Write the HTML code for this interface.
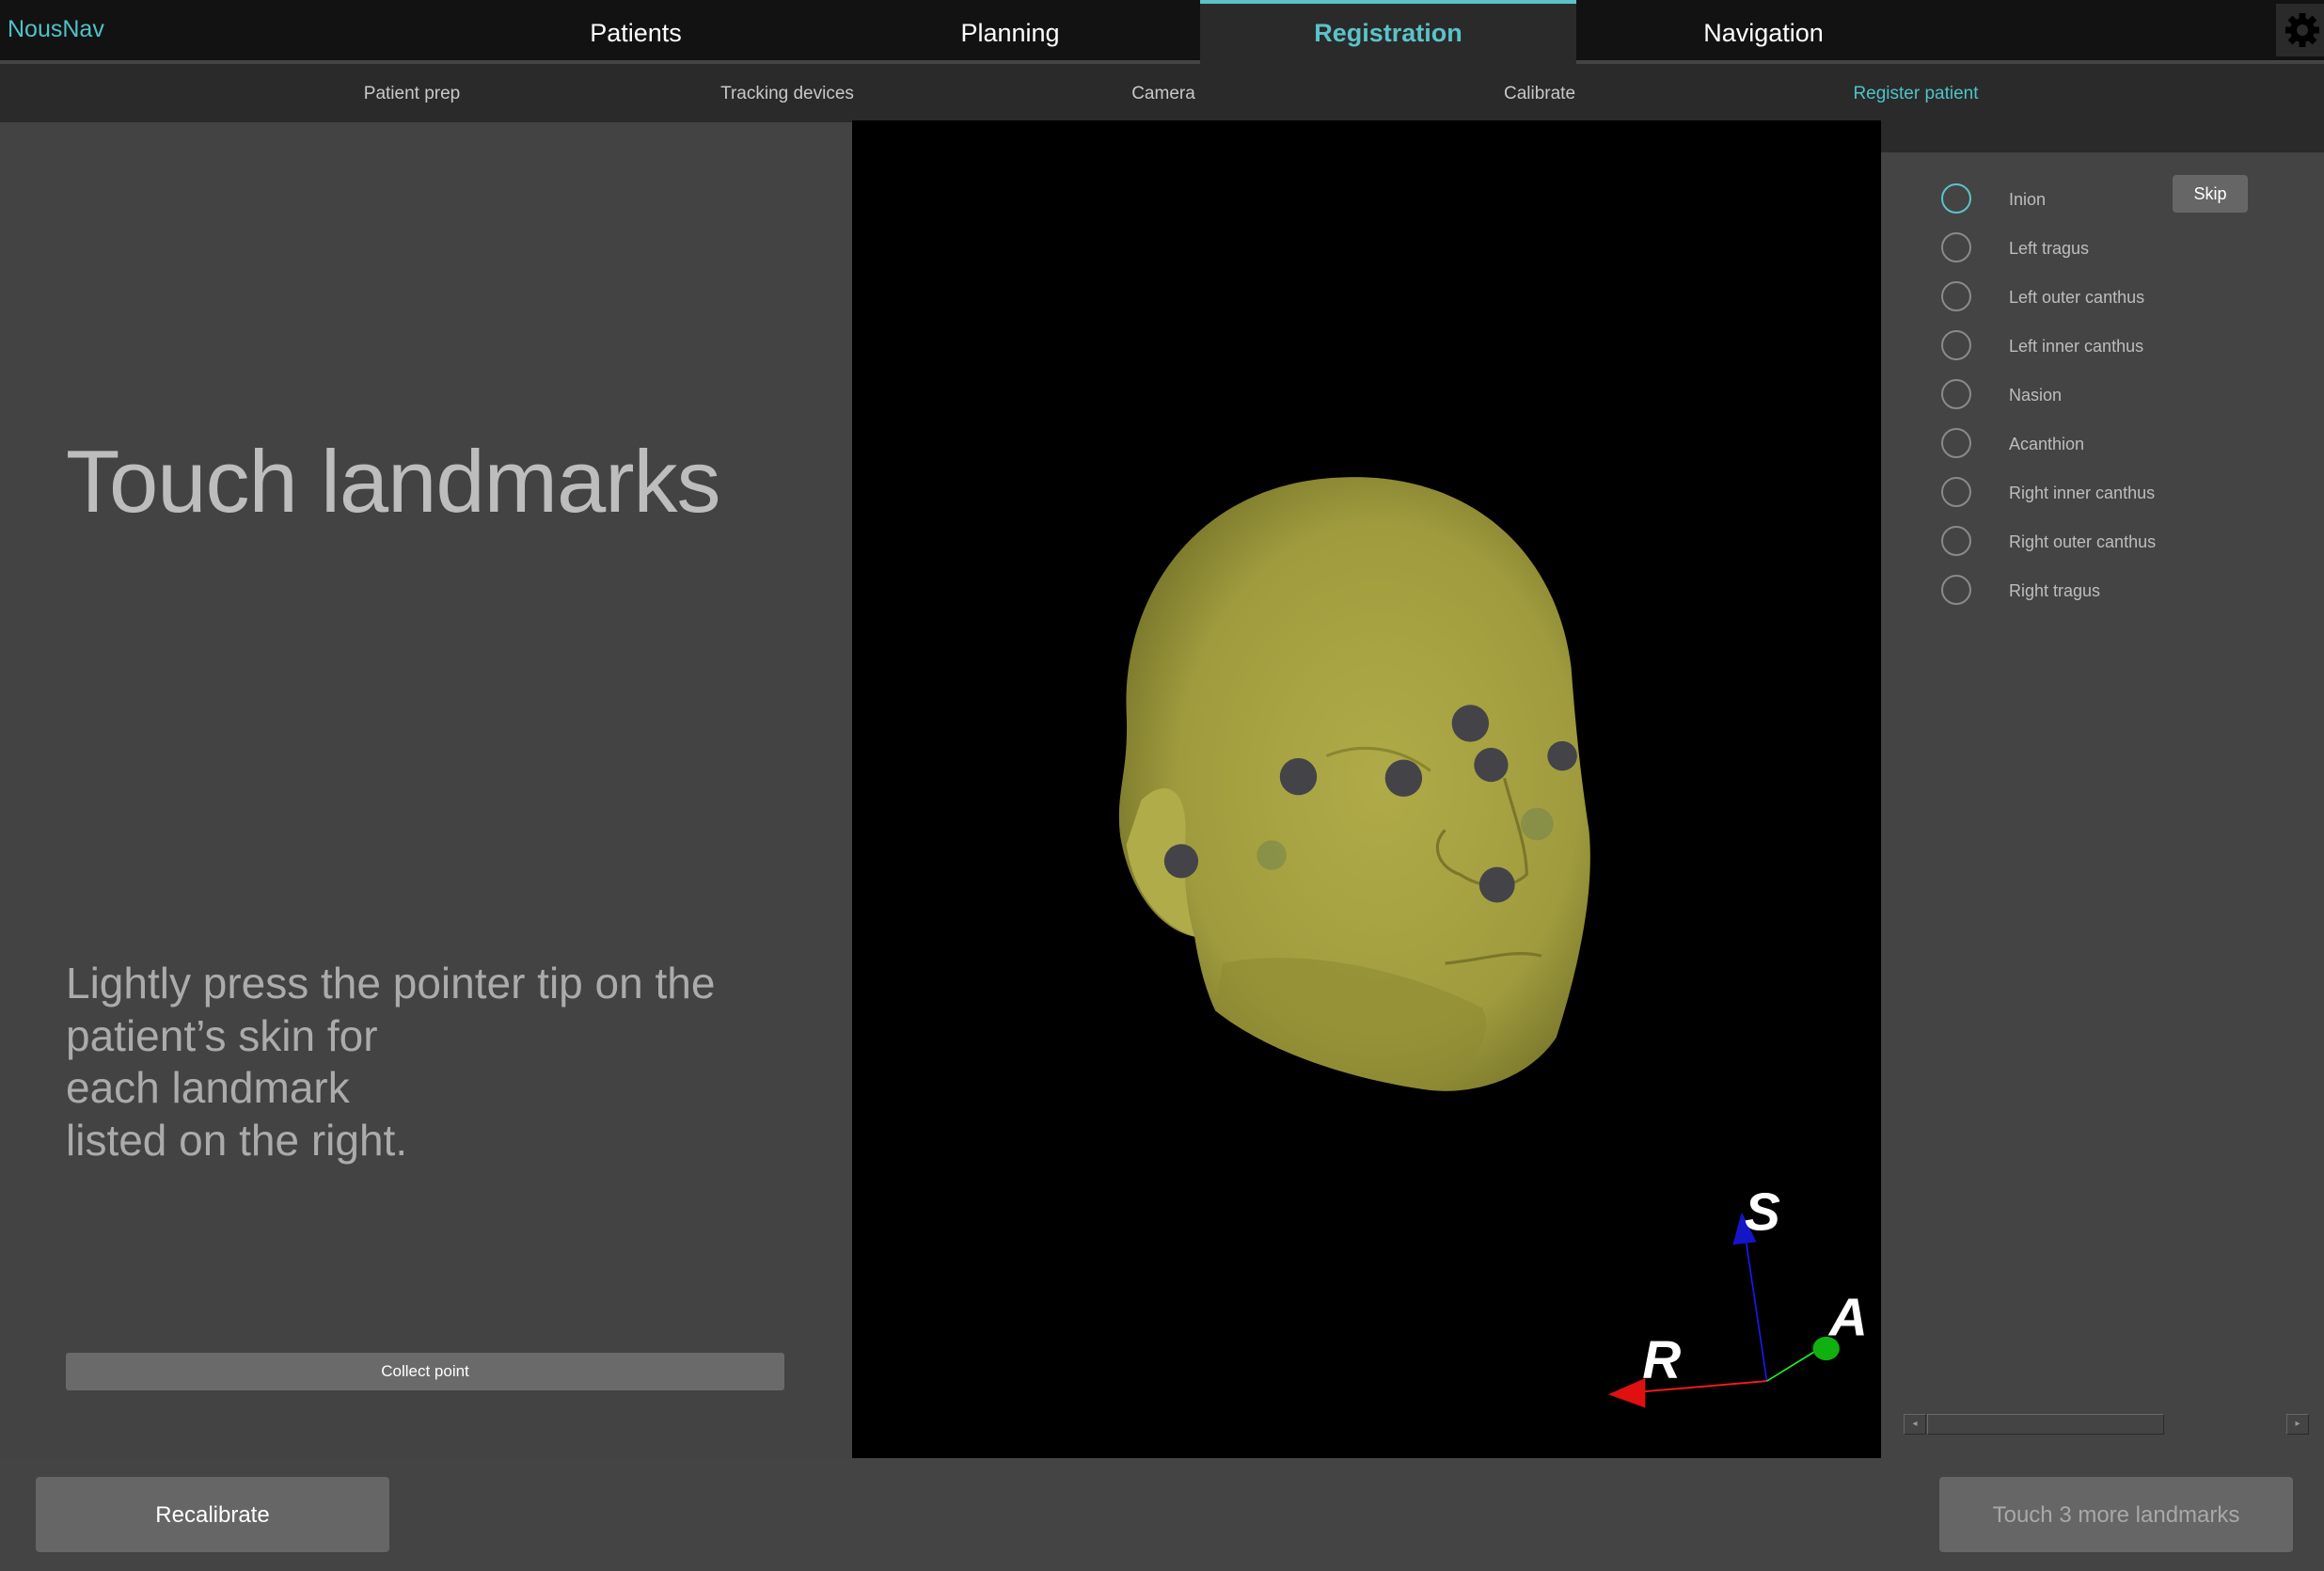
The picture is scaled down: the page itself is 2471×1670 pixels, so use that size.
<!DOCTYPE html>
<html><head><meta charset="utf-8"><style>
*{margin:0;padding:0;box-sizing:border-box}
body{width:2471px;height:1670px;background:#444;position:relative;overflow:hidden;font-family:"Liberation Sans","DejaVu Sans",sans-serif}
.a{position:absolute}
.hdr{left:0;top:0;width:2471px;height:64px;background:#121212}
.tab{top:0;height:64px;font-size:27px;color:#fff;text-align:center;line-height:70px}
.sub{top:68px;left:0;width:2471px;height:62px;background:#2a2a2a}
.st{top:68px;height:62px;line-height:64px;font-size:19px;color:#c8c8c8;text-align:center;width:300px}
.circ{width:32px;height:32px;border:2px solid #8a8a8a;border-radius:50%}
.lbl{font-size:18px;color:#bdbdbd}
.btn{background:#666;border-radius:4px;text-align:center}
</style></head><body>
<div class="a hdr"></div>
<div class="a" style="left:0;top:64px;width:2420px;height:4px;background:#444"></div>
<div class="a" style="left:1276px;top:0;width:400px;height:68px;background:#2a2a2a"></div>
<div class="a" style="left:1276px;top:0;width:400px;height:4px;background:#5bc3c8"></div>
<div class="a" style="left:8px;top:17px;font-size:25px;color:#4fc3c8">NousNav</div>
<div class="a tab" style="left:576px;width:200px">Patients</div>
<div class="a tab" style="left:974px;width:200px">Planning</div>
<div class="a tab" style="left:1276px;width:400px;color:#5bc3c8;font-weight:bold">Registration</div>
<div class="a tab" style="left:1775px;width:200px">Navigation</div>
<div class="a" style="left:2420px;top:4px;width:51px;height:56px;background:#2a2a2a"></div>
<svg class="a" style="left:2428px;top:12px" width="40" height="40" viewBox="0 0 40 40"><g fill="#000"><circle cx="20" cy="20" r="13"/><g stroke="#000" stroke-width="7"><line x1="20" y1="2" x2="20" y2="38"/><line x1="2" y1="20" x2="38" y2="20"/><line x1="7" y1="7" x2="33" y2="33"/><line x1="33" y1="7" x2="7" y2="33"/></g></g><circle cx="20" cy="20" r="6" fill="#2a2a2a"/></svg>
<div class="a sub"></div>
<div class="a st" style="left:288px">Patient prep</div>
<div class="a st" style="left:687px">Tracking devices</div>
<div class="a st" style="left:1087px">Camera</div>
<div class="a st" style="left:1487px">Calibrate</div>
<div class="a st" style="left:1887px;color:#4fc3c8">Register patient</div>

<div class="a" style="left:0;top:130px;width:906px;height:1420px;background:#434343"></div>
<div class="a" style="left:2000px;top:130px;width:471px;height:32px;background:#2a2a2a"></div>
<div class="a" style="left:70px;top:458px;font-size:94px;letter-spacing:-1px;color:#bdbdbd;white-space:nowrap">Touch landmarks</div>
<div class="a" style="left:70px;top:1018px;font-size:46px;line-height:55.5px;color:#ababab">Lightly press the pointer tip on the<br>patient’s skin for<br>each landmark<br>listed on the right.</div>
<div class="a btn" style="left:70px;top:1438px;width:764px;height:40px;background:#6a6a6a;border-radius:3px;font-size:17px;line-height:40px;color:#fff">Collect point</div>

<svg class="a" style="left:906px;top:128px" width="1094" height="1422" viewBox="575 81 694 903" preserveAspectRatio="none">
<rect x="575" y="81" width="694" height="903" fill="#000"/>
<defs><radialGradient id="g" cx="0.55" cy="0.5" r="0.6"><stop offset="0" stop-color="#b0ab48"/><stop offset="0.7" stop-color="#a09c3e"/><stop offset="1" stop-color="#77742a"/></radialGradient></defs>
<path d="M905 322 C990 318 1050 370 1060 450 C1063 490 1066 520 1072 560 C1076 600 1066 650 1050 700 C1030 730 990 740 960 735 C900 726 850 706 820 682 C812 665 808 645 806 632 C785 628 763 605 756 565 C752 535 762 522 760 480 C757 400 810 325 905 322 Z" fill="url(#g)"/>
<path d="M825 650 C870 640 940 650 1000 680 C1010 700 990 728 960 735 C900 726 850 706 820 682 Z" fill="#8d8a34" opacity="0.6"/>
<path d="M770 540 C785 525 800 530 800 560 C798 590 800 610 806 632 C785 625 765 605 760 570 Z" fill="#b0ac4a"/>
<path d="M1015 525 C1020 545 1030 570 1030 590 C1020 600 1000 600 985 590 C970 585 965 570 975 560" fill="none" stroke="#7a772c" stroke-width="2"/>
<path d="M895 510 C920 500 945 505 965 520" fill="none" stroke="#8a8732" stroke-width="2"/>
<path d="M975 650 C1000 648 1020 640 1040 645" fill="none" stroke="#7a772c" stroke-width="2"/>
<g fill="#444448"><circle cx="992" cy="488" r="12.5"/><circle cx="876" cy="524" r="12.5"/><circle cx="947" cy="525" r="12.5"/><circle cx="1006" cy="516" r="11.5"/><circle cx="797" cy="581" r="11.5"/><circle cx="1010" cy="597" r="12"/><circle cx="1054" cy="510" r="10"/></g>
<g fill="#7c8a4a" opacity="0.7"><circle cx="858" cy="577" r="10"/><circle cx="1037" cy="556" r="11"/></g>
<line x1="1192" y1="932" x2="1178" y2="838" stroke="#1a1aff" stroke-width="1"/>
<line x1="1192" y1="932" x2="1098" y2="940" stroke="#ff1a1a" stroke-width="1.2"/>
<line x1="1192" y1="932" x2="1226" y2="911" stroke="#1aff1a" stroke-width="1"/>
<polygon points="1175,818 1169,840 1185,838" fill="#1515c8"/>
<polygon points="1085,941 1110,930 1110,950" fill="#e01010"/>
<ellipse cx="1232" cy="910" rx="9" ry="8" fill="#10b010"/>
<g fill="#fff" font-weight="bold" font-style="italic" font-family="Liberation Sans,sans-serif" font-size="36"><text x="1177" y="830">S</text><text x="1108" y="930">R</text><text x="1234" y="901">A</text></g>
</svg>

<div class="a circ" style="left:2064px;top:195px;border-color:#5bc3c8"></div>
<div class="a lbl" style="left:2136px;top:202px">Inion</div>
<div class="a btn" style="left:2310px;top:186px;width:80px;height:40px;font-size:18px;line-height:40px;color:#fff">Skip</div>
<div class="a circ" style="left:2064px;top:247px"></div><div class="a lbl" style="left:2136px;top:254px">Left tragus</div>
<div class="a circ" style="left:2064px;top:299px"></div><div class="a lbl" style="left:2136px;top:306px">Left outer canthus</div>
<div class="a circ" style="left:2064px;top:351px"></div><div class="a lbl" style="left:2136px;top:358px">Left inner canthus</div>
<div class="a circ" style="left:2064px;top:403px"></div><div class="a lbl" style="left:2136px;top:410px">Nasion</div>
<div class="a circ" style="left:2064px;top:455px"></div><div class="a lbl" style="left:2136px;top:462px">Acanthion</div>
<div class="a circ" style="left:2064px;top:507px"></div><div class="a lbl" style="left:2136px;top:514px">Right inner canthus</div>
<div class="a circ" style="left:2064px;top:559px"></div><div class="a lbl" style="left:2136px;top:566px">Right outer canthus</div>
<div class="a circ" style="left:2064px;top:611px"></div><div class="a lbl" style="left:2136px;top:618px">Right tragus</div>

<div class="a" style="left:2024px;top:1503px;width:24px;height:22px;border:1px solid #2a2a2a;border-top-color:#666;border-left-color:#666;color:#999;font-size:10px;text-align:center;line-height:20px">◂</div>
<div class="a" style="left:2049px;top:1503px;width:252px;height:22px;border:1px solid #2a2a2a;border-top-color:#6a6a6a;border-left-color:#6a6a6a"></div>
<div class="a" style="left:2431px;top:1503px;width:24px;height:22px;border:1px solid #2a2a2a;border-top-color:#666;border-left-color:#666;color:#999;font-size:10px;text-align:center;line-height:20px">▸</div>

<div class="a btn" style="left:38px;top:1570px;width:376px;height:80px;font-size:24px;line-height:82px;color:#fff">Recalibrate</div>
<div class="a btn" style="left:2062px;top:1570px;width:376px;height:80px;font-size:24px;line-height:82px;color:#a8a8a8">Touch 3 more landmarks</div>
</body></html>
